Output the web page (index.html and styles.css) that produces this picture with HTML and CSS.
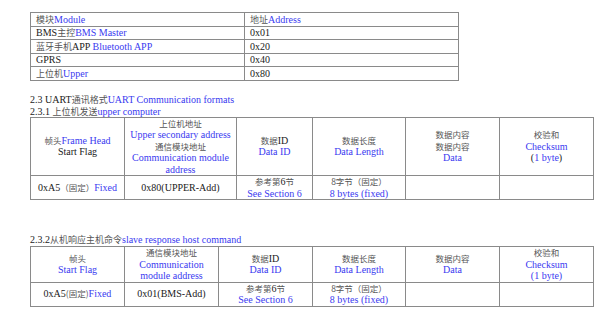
FILE: index.html
```html
<!DOCTYPE html>
<html>
<head>
<meta charset="utf-8">
<link rel="stylesheet" href="styles.css">
</head>
<body>
<div class="page">
  <table class="t1">
    <tr><td class="c1"><span class="zh">模块</span><span class="b">Module</span></td><td><span class="zh">地址</span><span class="b">Address</span></td></tr>
    <tr><td>BMS<span class="zh">主控</span><span class="b">BMS Master</span></td><td>0x01</td></tr>
    <tr><td><span class="zh">蓝牙手机</span>APP <span class="b">Bluetooth APP</span></td><td>0x20</td></tr>
    <tr><td>GPRS</td><td>0x40</td></tr>
    <tr><td><span class="zh">上位机</span><span class="b">Upper</span></td><td>0x80</td></tr>
  </table>

  <p class="h h1">2.3 UART<span class="zh">通讯格式</span><span class="b">UART Communication formats</span></p>
  <p class="h h2">2.3.1 <span class="zh">上位机发送</span><span class="b">upper computer</span></p>
  <table class="t2">
    <colgroup><col style="width:94px"><col style="width:112px"><col style="width:76px"><col style="width:93px"><col style="width:94px"><col style="width:94px"></colgroup>
    <tr class="hr2">
      <td><span class="zh">帧头</span><span class="b">Frame Head</span><br>Start Flag</td>
      <td><span class="zh">上位机地址</span><br><span class="b">Upper secondary address</span><br><span class="zh">通信模块地址</span><br><span class="b">Communication module<br>address</span></td>
      <td><span class="zh">数据</span>ID<br><span class="b">Data ID</span></td>
      <td><span class="zh">数据长度</span><br><span class="b">Data Length</span></td>
      <td><span class="zh">数据内容</span><br><span class="zh">数据内容</span><br><span class="b">Data</span></td>
      <td><span class="zh">校验和</span><br><span class="b">Checksum</span><br>(<span class="b">1 byte</span>)</td>
    </tr>
    <tr class="dr2">
      <td>0xA5<span class="zh">（固定）</span><span class="b">Fixed</span></td>
      <td>0x80(UPPER-Add)</td>
      <td><span class="zh">参考第</span>6<span class="zh">节</span><br><span class="b">See Section 6</span></td>
      <td><span class="zh">8字节（固定）</span><br><span class="b">8 bytes (fixed)</span></td>
      <td></td>
      <td></td>
    </tr>
  </table>

  <p class="h h3">2.3.2<span class="zh">从机响应主机命令</span><span class="b">slave response host command</span></p>
  <table class="t3">
    <colgroup><col style="width:94px"><col style="width:94px"><col style="width:94px"><col style="width:93px"><col style="width:94px"><col style="width:94px"></colgroup>
    <tr class="hr3">
      <td><span class="zh">帧头</span><br><span class="b">Start Flag</span></td>
      <td><span class="zh">通信模块地址</span><br><span class="b">Communication<br>module address</span></td>
      <td><span class="zh">数据</span>ID<br><span class="b">Data ID</span></td>
      <td><span class="zh">数据长度</span><br><span class="b">Data Length</span></td>
      <td><span class="zh">数据内容</span><br><span class="b">Data</span></td>
      <td><span class="zh">校验和</span><br><span class="b">Checksum</span><br><span class="b">(1 byte)</span></td>
    </tr>
    <tr class="dr3">
      <td>0xA5<span class="zh">(固定)</span><span class="b">Fixed</span></td>
      <td>0x01(BMS-Add)</td>
      <td><span class="zh">参考第</span>6<span class="zh">节</span><br><span class="b">See Section 6</span></td>
      <td><span class="zh">8字节（固定）</span><br><span class="b">8 bytes (fixed)</span></td>
      <td></td>
      <td></td>
    </tr>
  </table>
</div>
</body>
</html>
```

FILE: styles.css
```css
html, body {
  margin: 0;
  padding: 0;
  background: #ffffff;
}
body {
  font-family: "Liberation Serif", "Noto Sans CJK SC", serif;
  font-size: 10px;
  color: #1a1a1a;
}
.page {
  padding: 12px 0 0 30px;
}
.zh {
  font-family: "Noto Sans CJK SC", sans-serif;
  font-size: 8.5px;
  line-height: 1;
  color: #555555;
}
.b {
  color: #3a3af0;
}
table {
  border-collapse: collapse;
  table-layout: fixed;
}
td {
  border: 1px solid #8a8a8a;
  padding: 0;
  line-height: 11.5px;
}
.t1 {
  width: 429px;
}
.t1 td {
  height: 12.5px;
  padding: 0 5px;
  text-align: left;
  vertical-align: middle;
}
.t1 .zh {
  font-size: 9px;
}
.t1 .c1 {
  width: 203px;
}
.h {
  margin: 0;
  white-space: nowrap;
}
.h .zh {
  font-size: 9px;
}
.h1 {
  margin-top: 12px;
  line-height: 13px;
}
.h2 {
  margin-top: 0;
  line-height: 11px;
}
.h3 {
  margin-top: 34px;
  line-height: 12px;
}
.t2, .t3 {
  width: 564px;
}
.t2 td, .t3 td {
  text-align: center;
  vertical-align: middle;
}
.hr2 td {
  height: 57px;
}
.dr2 td {
  height: 23px;
}
.hr3 td {
  height: 34px;
}
.dr3 td {
  height: 22px;
}
```
